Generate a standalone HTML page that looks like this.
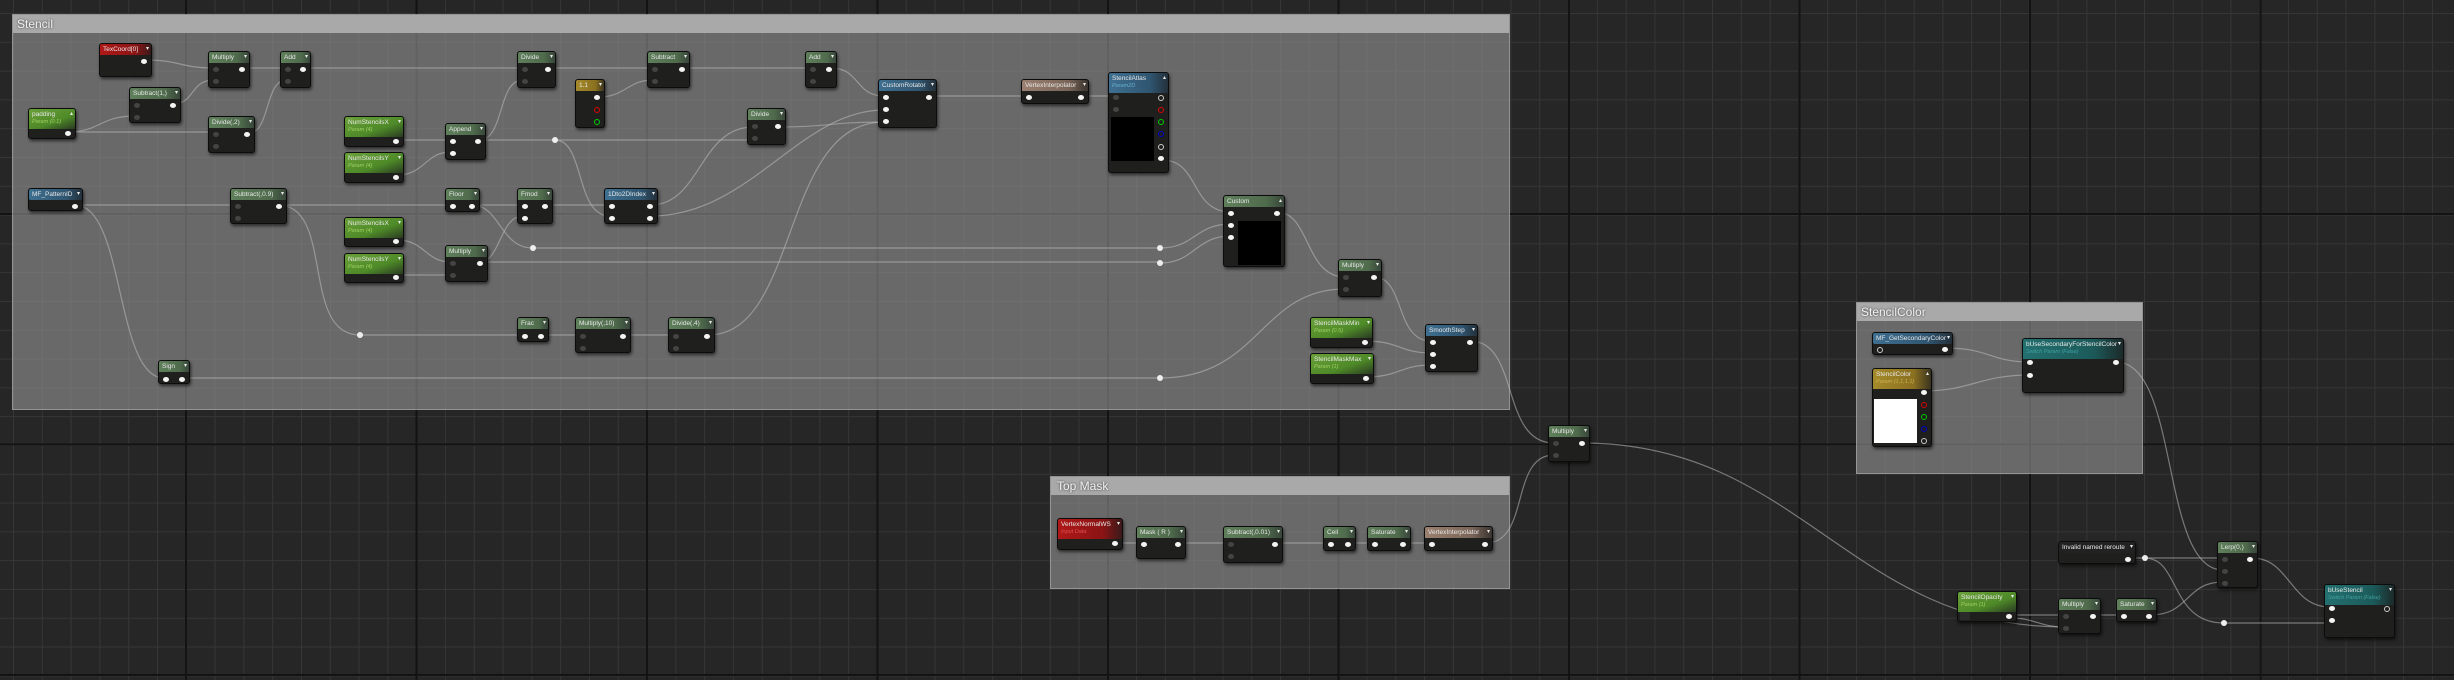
<!DOCTYPE html>
<html><head><meta charset="utf-8"><style>
*{margin:0;padding:0;box-sizing:border-box}
body{width:2454px;height:680px;overflow:hidden;position:relative;background-color:#262626;font-family:"Liberation Sans",sans-serif;
background-image:
linear-gradient(90deg,#131313 2px,transparent 2px),
linear-gradient(0deg,#131313 2px,transparent 2px),
linear-gradient(90deg,#363636 1px,transparent 1px),
linear-gradient(0deg,#363636 1px,transparent 1px);
background-size:230.5px 230.5px,230.5px 230.5px,28.81px 28.81px,28.81px 28.81px;
background-position:185px 0,0 215px,13px 0,0 14px}
.c{position:absolute;background:rgba(150,150,150,.6);border:1px solid rgba(190,190,190,.5)}
.c .t{height:18px;background:#a9a9a9;color:#f2f2f2;font-size:12px;line-height:18px;padding-left:4px;text-shadow:0 0 2px #333}
.n{position:absolute;background:#1f201e;border:1px solid #0c0c0c;border-radius:3px;box-shadow:1px 2px 3px rgba(0,0,0,.6)}
.h{height:11px;font-size:6.5px;line-height:11px;color:#e8e8e8;padding-left:3px;white-space:nowrap;overflow:hidden;border-radius:2px 2px 0 0;position:relative}
.h::after{content:"▾";position:absolute;right:2px;top:0;font-size:6px}
.h.u::after{content:"▴"}
.h.t2{height:20px}
.h i{display:block;font-style:italic;font-size:5.5px;line-height:8px;margin-top:-2px}
.g{background:linear-gradient(90deg,#5f7f5b,#4f6b4c 70%,#38463a)}
.pg{background:linear-gradient(160deg,#6aa03a,#4e8a28 60%,#2a3a22)}
.pg i{color:#9ed060}
.bl{background:linear-gradient(90deg,#3f6f90,#2f5570 70%,#24303a)}
.bl i{color:#6ab0d0}
.tl{background:linear-gradient(90deg,#237070,#1c5a5a 70%,#1c2a2a)}
.tl i{color:#40a0a0}
.rd{background:linear-gradient(90deg,#b01818,#8a1414 70%,#3a1a1a)}
.rd i{color:#e05050}
.yl{background:linear-gradient(90deg,#a58a2a,#8a7020 70%,#3a3420)}
.yl i{color:#d0b050}
.br{background:linear-gradient(90deg,#9a8070,#7a6558 70%,#3a3430)}
.dk{background:#222}
.p,.q{position:absolute;width:6px;height:5px;border-radius:50%}
.p{background:#f4f4f4}
.q{background:#444}
.o{position:absolute;width:6px;height:6px;border-radius:50%;border:1.3px solid #ccc}
.blk{position:absolute;background:#000}
.r{position:absolute;width:6px;height:6px;border-radius:50%;background:#eee;margin:-3px 0 0 -3px}
svg{position:absolute;left:0;top:0}
</style></head><body>

<div class="c" style="left:12px;top:14px;width:1498px;height:396px"><div class="t">Stencil</div></div>
<div class="c" style="left:1050px;top:476px;width:460px;height:113px"><div class="t" style="padding-left:6px">Top Mask</div></div>
<div class="c" style="left:1856px;top:302px;width:287px;height:172px"><div class="t">StencilColor</div></div>

<svg width="2454" height="680" fill="none" stroke="#bdbdbd" stroke-opacity=".55" stroke-width="1.2">
<path d="M146 60 C180 60,180 68,214 68"/>
<path d="M244 68 H286"/>
<path d="M305 68 H523"/>
<path d="M550 68 H653"/>
<path d="M684 68 H811"/>
<path d="M831 68 C860 68,855 96,884 96"/>
<path d="M599 97 C625 97,628 80,653 80"/>
<path d="M68 132 C100 132,100 116,135 116"/>
<path d="M68 132 H214"/>
<path d="M173 104 C195 104,190 80,214 80"/>
<path d="M249 133 C270 133,265 80,286 80"/>
<path d="M397 140 H451"/>
<path d="M397 175 C425 175,425 152,451 152"/>
<path d="M479 140 C505 140,497 80,523 80"/>
<path d="M479 140 H753"/>
<path d="M555 140 C585 140,575 216,610 216"/>
<path d="M75 205 H236"/>
<path d="M75 205 C125 205,115 378,164 378"/>
<path d="M278 205 H451"/>
<path d="M278 205 C335 205,300 335,360 335 H523"/>
<path d="M472 205 H523"/>
<path d="M472 205 C500 205,500 248,533 248 H1160"/>
<path d="M546 205 H610"/>
<path d="M397 240 C425 240,425 262,451 262"/>
<path d="M397 275 H451"/>
<path d="M480 262 C500 262,500 216,523 216"/>
<path d="M480 262 H1160"/>
<path d="M651 205 C700 205,700 127,753 127"/>
<path d="M651 216 C750 216,800 110,884 110"/>
<path d="M780 127 C830 127,830 122,884 122"/>
<path d="M546 335 H581"/>
<path d="M625 335 H674"/>
<path d="M708 335 C800 335,780 122,884 122"/>
<path d="M183 378 H1160"/>
<path d="M930 96 H1029"/>
<path d="M1083 96 H1114"/>
<path d="M1162 160 C1200 160,1190 212,1231 212"/>
<path d="M1160 248 C1195 248,1195 224,1231 224"/>
<path d="M1160 263 C1195 263,1195 236,1231 236"/>
<path d="M1277 212 C1310 212,1305 277,1345 277"/>
<path d="M1160 378 C1260 378,1260 289,1345 289"/>
<path d="M1374 277 C1405 277,1395 341,1431 341"/>
<path d="M1365 341 C1400 341,1400 353,1431 353"/>
<path d="M1365 377 C1400 377,1400 365,1431 365"/>
<path d="M1470 341 C1520 341,1500 443,1554 443"/>
<path d="M1118 543 H1486"/>
<path d="M1486 543 C1530 543,1510 455,1554 455"/>
<path d="M1582 443 C1800 443,1850 627,2064 627"/>
<path d="M2010 615 H2064"/>
<path d="M2010 618 C2035 618,2040 627,2064 627"/>
<path d="M2094 615 H2122"/>
<path d="M2150 615 C2190 615,2185 582,2223 582"/>
<path d="M2128 558 H2223"/>
<path d="M2145 558 C2180 558,2170 623,2224 623 H2330"/>
<path d="M2116 362 C2180 362,2160 570,2223 570"/>
<path d="M1945 348 C1990 348,1990 362,2030 362"/>
<path d="M1924 391 C1970 391,1980 375,2030 375"/>
<path d="M2252 558 C2290 558,2290 607,2330 607"/>
</svg>

<div class="r" style="left:555px;top:140px"></div>
<div class="r" style="left:533px;top:248px"></div>
<div class="r" style="left:360px;top:335px"></div>
<div class="r" style="left:1160px;top:248px"></div>
<div class="r" style="left:1160px;top:263px"></div>
<div class="r" style="left:1160px;top:378px"></div>
<div class="r" style="left:2145px;top:558px"></div>
<div class="r" style="left:2224px;top:623px"></div>

<div class="n" style="left:99px;top:43px;width:53px;height:34px"><div class="h rd">TexCoord[0]</div><b class="p" style="right:4px;top:15px"></b></div>
<div class="n" style="left:208px;top:51px;width:42px;height:37px"><div class="h g">Multiply</div><b class="q" style="left:4px;top:15px"></b><b class="q" style="left:4px;top:27px"></b><b class="p" style="right:4px;top:15px"></b></div>
<div class="n" style="left:280px;top:51px;width:31px;height:37px"><div class="h g">Add</div><b class="q" style="left:4px;top:15px"></b><b class="q" style="left:4px;top:27px"></b><b class="p" style="right:4px;top:15px"></b></div>
<div class="n" style="left:129px;top:87px;width:52px;height:36px"><div class="h g">Subtract(1,)</div><b class="q" style="left:4px;top:15px"></b><b class="q" style="left:4px;top:27px"></b><b class="p" style="right:4px;top:15px"></b></div>
<div class="n" style="left:28px;top:108px;width:48px;height:31px"><div class="h pg t2 u">padding<i>Param (0.1)</i></div><b class="p" style="right:4px;top:22px"></b></div>
<div class="n" style="left:208px;top:116px;width:47px;height:37px"><div class="h g">Divide(,2)</div><b class="q" style="left:4px;top:15px"></b><b class="q" style="left:4px;top:27px"></b><b class="p" style="right:4px;top:15px"></b></div>
<div class="n" style="left:344px;top:116px;width:60px;height:31px"><div class="h pg t2">NumStencilsX<i>Param (4)</i></div><b class="p" style="right:4px;top:22px"></b></div>
<div class="n" style="left:344px;top:152px;width:60px;height:31px"><div class="h pg t2">NumStencilsY<i>Param (4)</i></div><b class="p" style="right:4px;top:22px"></b></div>
<div class="n" style="left:445px;top:123px;width:41px;height:37px"><div class="h g">Append</div><b class="p" style="left:4px;top:15px"></b><b class="p" style="left:4px;top:27px"></b><b class="p" style="right:4px;top:15px"></b></div>
<div class="n" style="left:517px;top:51px;width:39px;height:37px"><div class="h g">Divide</div><b class="q" style="left:4px;top:15px"></b><b class="q" style="left:4px;top:27px"></b><b class="p" style="right:4px;top:15px"></b></div>
<div class="n" style="left:575px;top:79px;width:30px;height:49px"><div class="h yl">1.1</div><b class="p" style="right:4px;top:15px"></b><b class="o" style="right:4px;top:27px;border-color:#d00"></b><b class="o" style="right:4px;top:39px;border-color:#0c0"></b></div>
<div class="n" style="left:647px;top:51px;width:43px;height:37px"><div class="h g">Subtract</div><b class="q" style="left:4px;top:15px"></b><b class="q" style="left:4px;top:27px"></b><b class="p" style="right:4px;top:15px"></b></div>
<div class="n" style="left:747px;top:108px;width:39px;height:37px"><div class="h g">Divide</div><b class="q" style="left:4px;top:15px"></b><b class="q" style="left:4px;top:27px"></b><b class="p" style="right:4px;top:15px"></b></div>
<div class="n" style="left:28px;top:188px;width:55px;height:23px"><div class="h bl" style="border-radius:2px">MF_PatternID</div><b class="p" style="right:4px;top:15px"></b></div>
<div class="n" style="left:230px;top:188px;width:57px;height:36px"><div class="h g">Subtract(,0.9)</div><b class="q" style="left:4px;top:15px"></b><b class="q" style="left:4px;top:27px"></b><b class="p" style="right:4px;top:15px"></b></div>
<div class="n" style="left:445px;top:188px;width:35px;height:24px"><div class="h g">Floor</div><b class="p" style="left:4px;top:15px"></b><b class="p" style="right:4px;top:15px"></b></div>
<div class="n" style="left:517px;top:188px;width:36px;height:36px"><div class="h g">Fmod</div><b class="p" style="left:4px;top:15px"></b><b class="p" style="left:4px;top:27px"></b><b class="p" style="right:4px;top:15px"></b></div>
<div class="n" style="left:604px;top:188px;width:54px;height:36px"><div class="h bl">1Dto2DIndex</div><b class="p" style="left:4px;top:15px"></b><b class="p" style="left:4px;top:27px"></b><b class="p" style="right:4px;top:15px"></b><b class="p" style="right:4px;top:27px"></b></div>
<div class="n" style="left:344px;top:217px;width:60px;height:30px"><div class="h pg t2">NumStencilsX<i>Param (4)</i></div><b class="p" style="right:4px;top:21px"></b></div>
<div class="n" style="left:344px;top:253px;width:60px;height:30px"><div class="h pg t2">NumStencilsY<i>Param (4)</i></div><b class="p" style="right:4px;top:21px"></b></div>
<div class="n" style="left:445px;top:245px;width:43px;height:37px"><div class="h g">Multiply</div><b class="q" style="left:4px;top:15px"></b><b class="q" style="left:4px;top:27px"></b><b class="p" style="right:4px;top:15px"></b></div>
<div class="n" style="left:517px;top:317px;width:32px;height:25px"><div class="h g">Frac</div><b class="p" style="left:4px;top:16px"></b><b class="p" style="right:4px;top:16px"></b></div>
<div class="n" style="left:575px;top:317px;width:56px;height:36px"><div class="h g">Multiply(,10)</div><b class="q" style="left:4px;top:16px"></b><b class="q" style="left:4px;top:28px"></b><b class="p" style="right:4px;top:16px"></b></div>
<div class="n" style="left:668px;top:317px;width:47px;height:36px"><div class="h g">Divide(,4)</div><b class="q" style="left:4px;top:16px"></b><b class="q" style="left:4px;top:28px"></b><b class="p" style="right:4px;top:16px"></b></div>
<div class="n" style="left:158px;top:360px;width:32px;height:24px"><div class="h g">Sign</div><b class="p" style="left:4px;top:16px"></b><b class="p" style="right:4px;top:16px"></b></div>
<div class="n" style="left:805px;top:51px;width:32px;height:37px"><div class="h g">Add</div><b class="q" style="left:4px;top:15px"></b><b class="q" style="left:4px;top:27px"></b><b class="p" style="right:4px;top:15px"></b></div>
<div class="n" style="left:878px;top:79px;width:59px;height:49px"><div class="h bl">CustomRotator</div><b class="p" style="left:4px;top:15px"></b><b class="p" style="left:4px;top:27px"></b><b class="p" style="left:4px;top:39px"></b><b class="p" style="right:4px;top:15px"></b></div>
<div class="n" style="left:1021px;top:79px;width:68px;height:25px"><div class="h br">VertexInterpolator</div><b class="p" style="left:4px;top:15px"></b><b class="p" style="right:4px;top:15px"></b></div>
<div class="n" style="left:1108px;top:72px;width:61px;height:101px"><div class="h bl t2 u">StencilAtlas<i>Param2D</i></div><b class="q" style="left:4px;top:22px"></b><b class="q" style="left:4px;top:34px"></b><div class="blk" style="left:2px;top:44px;width:43px;height:44px"></div><b class="o" style="right:4px;top:22px"></b><b class="o" style="right:4px;top:34px;border-color:#d00"></b><b class="o" style="right:4px;top:46px;border-color:#0c0"></b><b class="o" style="right:4px;top:58px;border-color:#00c"></b><b class="o" style="right:4px;top:71px"></b><b class="p" style="right:4px;top:83px"></b></div>
<div class="n" style="left:1223px;top:195px;width:62px;height:72px"><div class="h g u">Custom</div><b class="p" style="left:4px;top:15px"></b><b class="p" style="left:4px;top:27px"></b><b class="p" style="left:4px;top:39px"></b><b class="p" style="right:4px;top:15px"></b><div class="blk" style="left:14px;top:25px;width:43px;height:44px"></div></div>
<div class="n" style="left:1338px;top:259px;width:44px;height:38px"><div class="h g">Multiply</div><b class="q" style="left:4px;top:15px"></b><b class="q" style="left:4px;top:27px"></b><b class="p" style="right:4px;top:15px"></b></div>
<div class="n" style="left:1310px;top:317px;width:63px;height:31px"><div class="h pg t2">StencilMaskMin<i>Param (0.5)</i></div><b class="p" style="right:4px;top:22px"></b></div>
<div class="n" style="left:1310px;top:353px;width:64px;height:31px"><div class="h pg t2">StencilMaskMax<i>Param (1)</i></div><b class="p" style="right:4px;top:22px"></b></div>
<div class="n" style="left:1425px;top:324px;width:53px;height:48px"><div class="h bl">SmoothStep</div><b class="p" style="left:4px;top:15px"></b><b class="p" style="left:4px;top:27px"></b><b class="p" style="left:4px;top:39px"></b><b class="p" style="right:4px;top:15px"></b></div>

<div class="n" style="left:1057px;top:518px;width:66px;height:32px"><div class="h rd t2">VertexNormalWS<i>Input Data</i></div><b class="p" style="right:4px;top:22px"></b></div>
<div class="n" style="left:1136px;top:526px;width:50px;height:33px"><div class="h g">Mask ( R )</div><b class="p" style="left:4px;top:15px"></b><b class="p" style="right:4px;top:15px"></b></div>
<div class="n" style="left:1223px;top:526px;width:60px;height:37px"><div class="h g">Subtract(,0.01)</div><b class="q" style="left:4px;top:15px"></b><b class="q" style="left:4px;top:27px"></b><b class="p" style="right:4px;top:15px"></b></div>
<div class="n" style="left:1323px;top:526px;width:33px;height:25px"><div class="h g">Ceil</div><b class="p" style="left:4px;top:15px"></b><b class="p" style="right:4px;top:15px"></b></div>
<div class="n" style="left:1367px;top:526px;width:44px;height:25px"><div class="h g">Saturate</div><b class="p" style="left:4px;top:15px"></b><b class="p" style="right:4px;top:15px"></b></div>
<div class="n" style="left:1424px;top:526px;width:69px;height:25px"><div class="h br">VertexInterpolator</div><b class="p" style="left:4px;top:15px"></b><b class="p" style="right:4px;top:15px"></b></div>
<div class="n" style="left:1548px;top:425px;width:42px;height:37px"><div class="h g">Multiply</div><b class="q" style="left:4px;top:15px"></b><b class="q" style="left:4px;top:27px"></b><b class="p" style="right:4px;top:15px"></b></div>

<div class="n" style="left:1872px;top:332px;width:81px;height:23px"><div class="h bl" style="border-radius:2px">MF_GetSecondaryColor</div><b class="o" style="left:4px;top:14px"></b><b class="p" style="right:4px;top:14px"></b></div>
<div class="n" style="left:1872px;top:368px;width:60px;height:79px"><div class="h yl t2 u">StencilColor<i>Param (1,1,1,1)</i></div><b class="p" style="right:4px;top:21px"></b><div class="blk" style="left:1px;top:30px;width:43px;height:44px;background:#fff"></div><b class="o" style="right:4px;top:33px;border-color:#d00"></b><b class="o" style="right:4px;top:45px;border-color:#0c0"></b><b class="o" style="right:4px;top:57px;border-color:#00c"></b><b class="o" style="right:4px;top:69px"></b></div>
<div class="n" style="left:2022px;top:338px;width:102px;height:55px"><div class="h tl t2" style="font-size:6.5px">bUseSecondaryForStencilColor<i>Switch Param (False)</i></div><b class="p" style="left:4px;top:21px"></b><b class="p" style="left:4px;top:34px"></b><b class="p" style="right:4px;top:21px"></b></div>
<div class="n" style="left:2058px;top:541px;width:78px;height:23px"><div class="h dk" style="border-radius:2px">Invalid named reroute</div><b class="p" style="right:4px;top:15px"></b></div>
<div class="n" style="left:2217px;top:541px;width:41px;height:47px"><div class="h g">Lerp(0,)</div><b class="q" style="left:4px;top:15px"></b><b class="q" style="left:4px;top:27px"></b><b class="q" style="left:4px;top:39px"></b><b class="p" style="right:4px;top:15px"></b></div>
<div class="n" style="left:1957px;top:591px;width:60px;height:31px"><div class="h pg t2">StencilOpacity<i>Param (1)</i></div><b class="p" style="right:4px;top:22px"></b><div class="blk" style="left:2px;top:20px;width:10px;height:8px;background:#2a2a2a"></div></div>
<div class="n" style="left:2058px;top:598px;width:43px;height:36px"><div class="h g">Multiply</div><b class="q" style="left:4px;top:15px"></b><b class="q" style="left:4px;top:27px"></b><b class="p" style="right:4px;top:15px"></b></div>
<div class="n" style="left:2116px;top:598px;width:41px;height:24px"><div class="h g">Saturate</div><b class="p" style="left:4px;top:15px"></b><b class="p" style="right:4px;top:15px"></b></div>
<div class="n" style="left:2324px;top:584px;width:71px;height:54px"><div class="h tl t2">bUseStencil<i>Switch Param (False)</i></div><b class="p" style="left:4px;top:21px"></b><b class="p" style="left:4px;top:33px"></b><b class="o" style="right:4px;top:21px"></b></div>

</body></html>
